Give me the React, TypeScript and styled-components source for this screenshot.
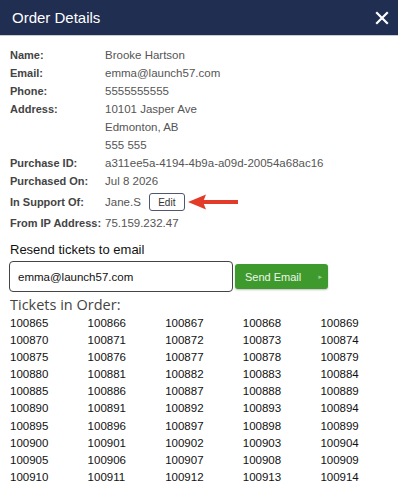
import React from 'react';
import styled, { createGlobalStyle } from 'styled-components';

const GlobalStyle = createGlobalStyle`
    body {
        margin: 0;
        background: #fff;
        font-family: "Liberation Sans", Arial, sans-serif;
    }
`;

const Modal = styled.div`
    width: 398px;
    height: 500px;
    overflow: hidden;
    background: #fff;
`;

const Header = styled.div`
    height: 35px;
    background: #202e52;
    border-bottom: 1px solid #c9ccd6;
    display: flex;
    align-items: center;
    justify-content: space-between;
    padding: 0 9px 0 12px;
    color: #fff;

    h1 {
        margin: 0;
        font-size: 15px;
        font-weight: normal;
    }
`;

const Close = styled.svg`
    display: block;
`;

const Body = styled.div`
    padding: 10px 0 0 10px;
`;

const Details = styled.div`
    display: grid;
    grid-template-columns: 95px 1fr;
    font-size: 11.5px;
    line-height: 18px;
`;

const Label = styled.div<{ $tall?: boolean }>`
    font-weight: bold;
    font-size: 11px;
    color: #444;
    white-space: nowrap;
    ${p => p.$tall && 'line-height: 22px; margin-top: 1px;'}
`;

const Value = styled.div<{ $tall?: boolean }>`
    color: #555;
    display: flex;
    align-items: center;
    gap: 8px;
    white-space: nowrap;
    ${p => p.$tall && 'height: 22px; margin-top: 1px; margin-bottom: 1px;'}
`;

const EditButton = styled.button`
    font-family: "Liberation Sans", Arial, sans-serif;
    font-size: 10px;
    color: #333;
    background: #fff;
    border: 1.5px solid #505670;
    border-radius: 3px;
    height: 18px;
    width: 36px;
    padding: 0;
`;

const Arrow = styled.svg`
    margin-left: -5px;
`;

const SectionTitle = styled.div`
    margin-top: 10px;
    font-size: 13px;
    color: #111;
    line-height: 16px;
`;

const EmailRow = styled.div`
    display: flex;
    align-items: center;
    gap: 2px;
    margin-top: 3px;
    margin-left: -1px;
`;

const EmailInput = styled.input`
    box-sizing: border-box;
    width: 224px;
    height: 31px;
    border: 1px solid #444;
    border-radius: 4px;
    padding: 0 8px;
    font-family: "Liberation Sans", Arial, sans-serif;
    font-size: 11.5px;
    color: #111;
`;

const SendButton = styled.button`
    height: 25px;
    width: 93px;
    background: #3f9a2e;
    color: #eef6ea;
    border: none;
    border-radius: 3px;
    box-shadow: 0 1px 2px rgba(0, 0, 0, 0.25);
    font-family: "Liberation Sans", Arial, sans-serif;
    font-size: 11px;
    display: flex;
    align-items: center;
    padding: 0 0 0 10px;

    span {
        margin-left: 16px;
        font-size: 6px;
        color: #9ccc8e;
    }
`;

const TicketsTitle = styled.div`
    font-family: "Open Sans", sans-serif;
    font-size: 14.5px;
    color: #444;
    margin-top: 3px;
    line-height: 20px;
`;

const TicketGrid = styled.div`
    display: grid;
    grid-template-columns: repeat(5, 77.6px);
    font-size: 11.5px;
    line-height: 17.1px;
    color: #111;
`;

const details: Array<[string, string[]]> = [
    ['Name:', ['Brooke Hartson']],
    ['Email:', ['emma@launch57.com']],
    ['Phone:', ['5555555555']],
    ['Address:', ['10101 Jasper Ave', 'Edmonton, AB', '555 555']],
    ['Purchase ID:', ['a311ee5a-4194-4b9a-a09d-20054a68ac16']],
    ['Purchased On:', ['Jul 8 2026']],
];

const tickets = Array.from({ length: 50 }, (_, i) => 100865 + i);

const App: React.FC = () => {
    return (
        <>
            <GlobalStyle />
            <Modal>
                <Header>
                    <h1>Order Details</h1>
                    <Close width="14" height="14" viewBox="0 0 14 14">
                        <path d="M2 2 L12 12 M12 2 L2 12" stroke="#fff" strokeWidth="2.2" strokeLinecap="square" />
                    </Close>
                </Header>
                <Body>
                    <Details>
                        {details.map(([label, lines]) => (
                            <React.Fragment key={label}>
                                <Label>{label}</Label>
                                <div>
                                    {lines.map(line => <Value key={line}>{line}</Value>)}
                                </div>
                            </React.Fragment>
                        ))}
                        <Label $tall>In Support Of:</Label>
                        <Value $tall>
                            Jane.S
                            <EditButton>Edit</EditButton>
                            <Arrow width="52" height="18" viewBox="0 0 52 18">
                                <path d="M14 7 H50 V11 H14 Z" fill="#e23b2a" />
                                <path d="M0 9 L18 1.5 L15 9 L18 16.5 Z" fill="#e23b2a" />
                            </Arrow>
                        </Value>
                        <Label>From IP Address:</Label>
                        <Value>75.159.232.47</Value>
                    </Details>
                    <SectionTitle>Resend tickets to email</SectionTitle>
                    <EmailRow>
                        <EmailInput defaultValue="emma@launch57.com" />
                        <SendButton>Send Email<span>►</span></SendButton>
                    </EmailRow>
                    <TicketsTitle>Tickets in Order:</TicketsTitle>
                    <TicketGrid>
                        {tickets.map(t => <div key={t}>{t}</div>)}
                    </TicketGrid>
                </Body>
            </Modal>
        </>
    );
};

export default App;
